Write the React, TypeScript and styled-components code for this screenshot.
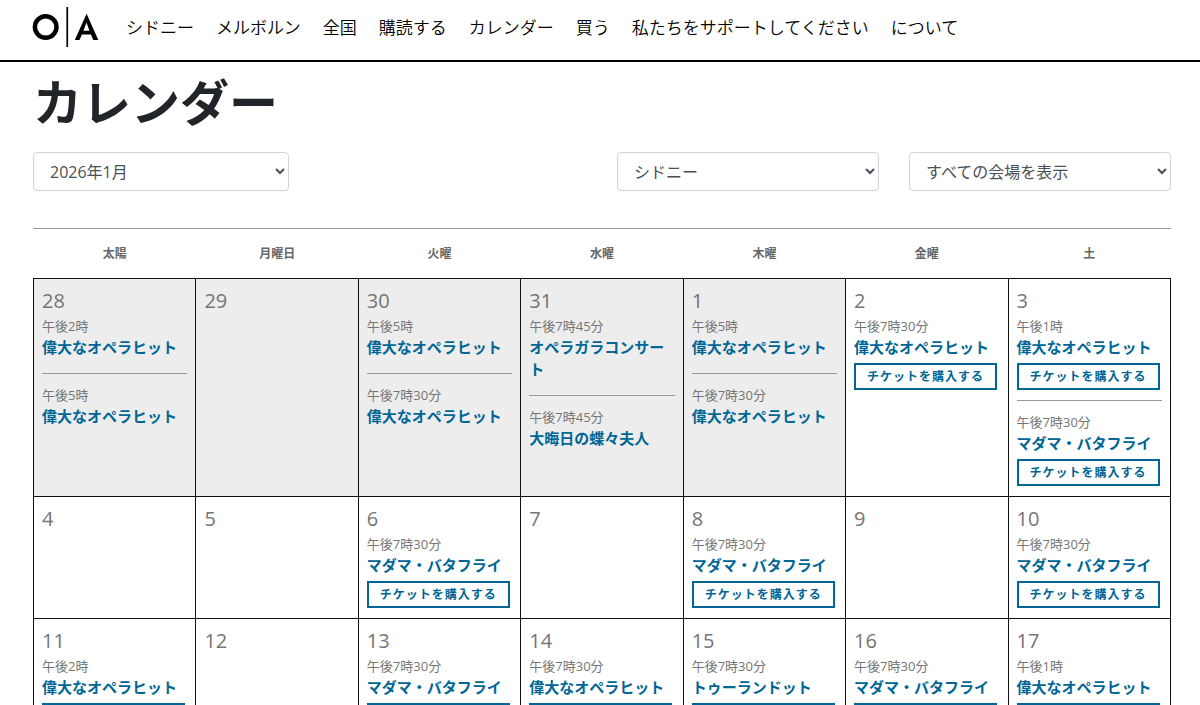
import React from "react";
import styled, { createGlobalStyle, css } from "styled-components";

const GlobalStyle = createGlobalStyle`
  *, *::before, *::after { box-sizing: border-box; }
  body {
    margin: 0;
    background: #fff;
    color: #212529;
    font-family: "Open Sans", "Noto Sans CJK JP", sans-serif;
    font-size: 16px;
    line-height: 24px;
  }
`;

const Header = styled.header`
  display: flex;
  align-items: center;
  gap: 27px;
  height: 62px;
  padding: 0 32px 6px;
  border-bottom: 2px solid #000;
`;

const LogoLink = styled.a`
  display: block;
  width: 67px;
  height: 40px;
`;

const Nav = styled.nav`
  display: flex;
  gap: 22px;
  padding-top: 2px;
`;

const NavLink = styled.a`
  color: #000;
  font-size: 17px;
  font-weight: 350;
  text-decoration: none;
  white-space: nowrap;
`;

const Main = styled.main`
  padding: 0 29px 0 33px;
`;

const Title = styled.h1`
  margin: 0;
  padding: 10px 0 20px;
  font-size: 49px;
  line-height: 60px;
  font-weight: 700;
`;

const Filters = styled.form`
  display: grid;
  grid-template-columns: repeat(4, 1fr);
  gap: 30px;
  padding-bottom: 37px;
  border-bottom: 1px solid #999;
`;

const Select = styled.select<{ $column: number; $maxWidth?: number }>`
  grid-column: ${(p) => p.$column};
  width: 100%;
  max-width: ${(p) => (p.$maxWidth ? `${p.$maxWidth}px` : "none")};
  height: 39px;
  padding: 6px 12px;
  border: 1px solid #ced4da;
  border-radius: 4px;
  background: #fff;
  color: #495057;
  font-family: inherit;
  font-size: 16px;
  font-weight: 400;
`;

const Calendar = styled.table`
  width: 100%;
  table-layout: fixed;
  border-collapse: collapse;
`;

const Weekday = styled.th`
  height: 49px;
  padding: 2px 0 0;
  color: #666;
  font-size: 12px;
  line-height: 20px;
  font-weight: 700;
`;

const Day = styled.td<{ $past?: boolean }>`
  padding: 7px 8px 0;
  border: 1px solid #111;
  vertical-align: top;
  color: #757575;
  ${(p) =>
    p.$past &&
    css`
      background: #ededed;
    `}
`;

const DayNumber = styled.div`
  font-size: 20px;
  line-height: 30px;
`;

const Event = styled.div`
  padding-bottom: 10px;

  & + & {
    padding-top: 11px;
    border-top: 1px solid #999;
  }
`;

const Time = styled.div`
  font-size: 13px;
  line-height: 20px;
`;

const EventLink = styled.a`
  display: block;
  padding-bottom: 5px;
  color: #006695;
  font-size: 15px;
  line-height: 22px;
  font-weight: 700;
  text-decoration: none;
`;

const BuyButton = styled.button`
  display: block;
  height: 27px;
  padding: 2px 11px 0;
  border: 2px solid #006695;
  background: #fff;
  color: #006695;
  font-family: inherit;
  font-size: 12px;
  line-height: 20px;
  font-weight: 600;
  letter-spacing: 1px;
  white-space: nowrap;
`;

type Show = { time: string; name: string; buy?: boolean };
type DayData = { day: number; past?: boolean; shows?: Show[] };

const HITS = "偉大なオペラヒット";
const BUTTERFLY = "マダマ・バタフライ";

const links = [
  "シドニー",
  "メルボルン",
  "全国",
  "購読する",
  "カレンダー",
  "買う",
  "私たちをサポートしてください",
  "について",
];

const weekdays = ["太陽", "月曜日", "火曜", "水曜", "木曜", "金曜", "土"];

const weeks: DayData[][] = [
  [
    { day: 28, past: true, shows: [{ time: "午後2時", name: HITS }, { time: "午後5時", name: HITS }] },
    { day: 29, past: true },
    { day: 30, past: true, shows: [{ time: "午後5時", name: HITS }, { time: "午後7時30分", name: HITS }] },
    {
      day: 31,
      past: true,
      shows: [
        { time: "午後7時45分", name: "オペラガラコンサート" },
        { time: "午後7時45分", name: "大晦日の蝶々夫人" },
      ],
    },
    { day: 1, past: true, shows: [{ time: "午後5時", name: HITS }, { time: "午後7時30分", name: HITS }] },
    { day: 2, shows: [{ time: "午後7時30分", name: HITS, buy: true }] },
    {
      day: 3,
      shows: [
        { time: "午後1時", name: HITS, buy: true },
        { time: "午後7時30分", name: BUTTERFLY, buy: true },
      ],
    },
  ],
  [
    { day: 4 },
    { day: 5 },
    { day: 6, shows: [{ time: "午後7時30分", name: BUTTERFLY, buy: true }] },
    { day: 7 },
    { day: 8, shows: [{ time: "午後7時30分", name: BUTTERFLY, buy: true }] },
    { day: 9 },
    { day: 10, shows: [{ time: "午後7時30分", name: BUTTERFLY, buy: true }] },
  ],
  [
    { day: 11, shows: [{ time: "午後2時", name: HITS, buy: true }] },
    { day: 12 },
    { day: 13, shows: [{ time: "午後7時30分", name: BUTTERFLY, buy: true }] },
    { day: 14, shows: [{ time: "午後7時30分", name: HITS, buy: true }] },
    { day: 15, shows: [{ time: "午後7時30分", name: "トゥーランドット", buy: true }] },
    { day: 16, shows: [{ time: "午後7時30分", name: BUTTERFLY, buy: true }] },
    { day: 17, shows: [{ time: "午後1時", name: HITS, buy: true }] },
  ],
];

function Logo() {
  return (
    <svg width="67" height="40" viewBox="0 0 67 40" aria-hidden="true">
      <circle cx="13.7" cy="20" r="10.8" fill="none" stroke="#000" strokeWidth="4.4" />
      <rect x="34.4" y="0" width="1.7" height="40" fill="#000" />
      <path
        d="M54.6 6.8 L66.3 33 H61.3 L58.9 27.5 H49.9 L47.5 33 H42.8 Z M54.5 15.6 L51.4 23.8 H57.4 Z"
        fill="#000"
        fillRule="evenodd"
      />
    </svg>
  );
}

export default function App() {
  return (
    <>
      <GlobalStyle />
      <Header>
        <LogoLink href="#" aria-label="Opera Australia">
          <Logo />
        </LogoLink>
        <Nav>
          {links.map((label) => (
            <NavLink key={label} href="#">
              {label}
            </NavLink>
          ))}
        </Nav>
      </Header>
      <Main>
        <Title>カレンダー</Title>
        <Filters>
          <Select $column={1} $maxWidth={256} aria-label="月">
            <option>2026年1月</option>
          </Select>
          <Select $column={3} aria-label="都市">
            <option>シドニー</option>
          </Select>
          <Select $column={4} aria-label="会場">
            <option>すべての会場を表示</option>
          </Select>
        </Filters>
        <Calendar>
          <thead>
            <tr>
              {weekdays.map((name) => (
                <Weekday key={name} scope="col">
                  {name}
                </Weekday>
              ))}
            </tr>
          </thead>
          <tbody>
            {weeks.map((week) => (
              <tr key={week[0].day}>
                {week.map(({ day, past, shows = [] }) => (
                  <Day key={day} $past={past}>
                    <DayNumber>{day}</DayNumber>
                    {shows.map((show, i) => (
                      <Event key={i}>
                        <Time>{show.time}</Time>
                        <EventLink href="#">{show.name}</EventLink>
                        {show.buy && <BuyButton type="button">チケットを購入する</BuyButton>}
                      </Event>
                    ))}
                  </Day>
                ))}
              </tr>
            ))}
          </tbody>
        </Calendar>
      </Main>
    </>
  );
}
